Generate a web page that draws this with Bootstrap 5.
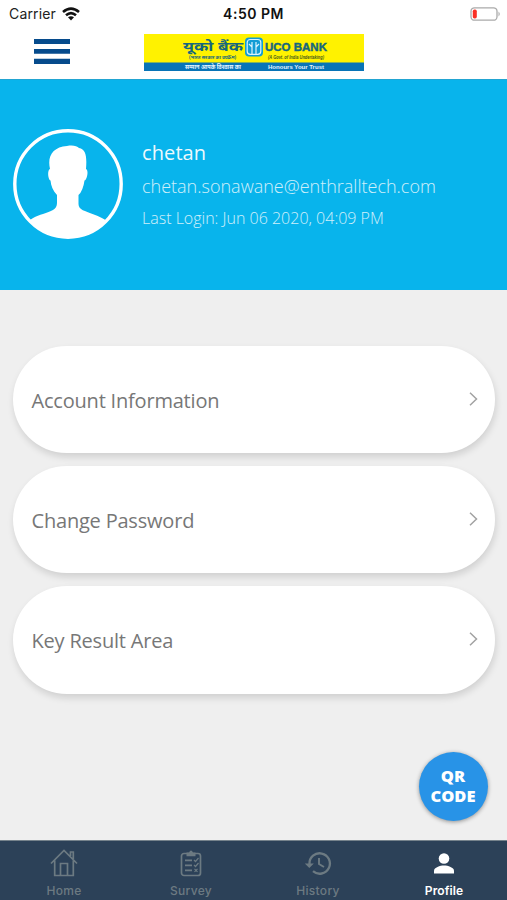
<!DOCTYPE html>
<html lang="en">
<head>
<meta charset="utf-8">
<meta name="viewport" content="width=device-width, initial-scale=1">
<title>Profile</title>
<link rel="stylesheet" href="https://cdn.jsdelivr.net/npm/bootstrap@5.3.0/dist/css/bootstrap.min.css">
<style>
body{background:#efefef;font-family:"Open Sans","Noto Sans",sans-serif;height:900px;overflow:hidden}
svg{display:block;flex:none}
.screen{height:900px}
.status-bar{height:28px;font:14px/28px Inter,sans-serif;color:#222;padding:0 6px 0 9px}
.carrier{letter-spacing:.15px}
.status-bar .clock{font-weight:600;font-size:14px;letter-spacing:.5px;color:#111;padding-right:3px}
.brand-bar{height:51px;padding:6px 0 0 34px}
.menu-btn{width:36px;margin-top:5px}
.brand-logo{margin-left:74px}
.hero{height:211px;background:#08b4ec;padding:0 13px;border-top:1px solid #22a5d2;color:#fff}
.avatar{margin-top:-2px}
.hero .person{margin-left:19px;white-space:nowrap}
.person-name{font-size:20px;line-height:32px;letter-spacing:.1px;font-weight:400;opacity:.93}
.person-mail{font-size:18px;line-height:34px;font-weight:300;opacity:.8}
.person-login{font-size:16px;line-height:30px;font-weight:300;opacity:.8}
.options{padding:55.5px 12.5px 0 13px;gap:12.5px}
.option{height:107.7px;border-radius:54px;background:#fff;color:#777;text-decoration:none;padding:3px 17px 0 18.5px;box-shadow:1px 4px 7px rgba(0,0,0,.13);font-size:20px;letter-spacing:-.2px}
.option svg{margin-top:-4px}
.qr-btn{width:69px;height:69px;background:#2893e7;color:#fff;font-weight:800;font-size:16.5px;line-height:20px;margin:0 19.5px 19px 0;padding-bottom:2px!important;box-shadow:0 1px 4px rgba(0,0,0,.4)}
.tabs{height:60px;background:#2c4158;border-top:1px solid #76838c;color:#6c7a82;font:500 12px/14px Inter,sans-serif;letter-spacing:.3px}
.tab-link{color:inherit;text-decoration:none;padding:8px 0 0 1px}
.tab-link span{margin-top:7px}
.tab-link.active{color:#fff;font-weight:600;letter-spacing:.1px;padding-left:0}
</style>
<script src="https://cdn.jsdelivr.net/npm/bootstrap@5.3.0/dist/js/bootstrap.bundle.min.js"></script>
</head>
<body>
<div class="screen d-flex flex-column">
<header class="bg-white">
  <div class="status-bar row g-0 align-items-center">
    <div class="col d-flex align-items-center"><span class="carrier">Carrier</span>
      <svg style="margin-left:6px" width="18" height="14" viewBox="0 0 18 14" fill="none" stroke="#111" stroke-width="2.6"><path d="M1 5Q9-1.8 17 5M4 8.3Q9 4 14 8.3"/><path d="M6 10.3Q9 8 12 10.3L9 13.5z" fill="#111" stroke="none"/></svg>
    </div>
    <div class="col-auto clock">4:50 PM</div>
    <div class="col d-flex justify-content-end">
      <svg width="31" height="14" viewBox="0 0 31 14"><rect x="1" y=".8" width="26" height="12.4" rx="3.5" fill="#fff" stroke="#aaa" stroke-width="1.3"/><rect x="2.8" y="2.6" width="4" height="8.8" rx="1.7" fill="#fa3026"/><path d="M28.5 4.5Q31 7 28.5 9.5z" fill="#aaa"/></svg>
    </div>
  </div>
  <div class="brand-bar d-flex align-items-start">
    <button class="menu-btn btn p-0 border-0" type="button" aria-label="Menu"><svg width="36" height="25" viewBox="0 0 36 25" fill="#064b8c"><path d="M0 0h36v5H0zM0 10h36v4.700H0zM0 19.800h36V25H0z"/></svg></button>
    <svg class="brand-logo" width="220" height="37" viewBox="0 0 220 37">
      <rect width="220" height="37" fill="#fff200"/><rect y="28.500" width="220" height="8.500" fill="#0874b7"/>
      <g fill="#17677d" font-family="Noto Sans, sans-serif" font-weight="700">
        <text x="39" y="17" font-size="13" textLength="60" lengthAdjust="spacingAndGlyphs">यूको बैंक</text>
        <text x="45" y="25" font-size="5" textLength="47" lengthAdjust="spacingAndGlyphs">(भारत सरकार का उपक्रम)</text>
      </g>
      <rect x="101" y="3.500" width="18" height="19" rx="4" fill="#129cd5"/>
      <g fill="none" stroke="#d9f3ff" stroke-width="1.200"><rect x="103.200" y="5.500" width="13.600" height="14.800" rx="3"/><path d="M108 20v-7l-3-3M112 20v-7l3-3M108 13V8M112 13V8"/></g>
      <g font-family="Liberation Sans, sans-serif" font-weight="700">
        <text x="121" y="17" font-size="10.500" fill="#17677d" stroke="#17677d" stroke-width=".4" textLength="62" lengthAdjust="spacingAndGlyphs">UCO BANK</text>
        <text x="124" y="25" font-size="4.500" font-style="italic" fill="#45591d" textLength="56" lengthAdjust="spacingAndGlyphs">(A Govt. of India Undertaking)</text>
        <text x="124" y="35" font-size="6" fill="#e6f5ff" textLength="56" lengthAdjust="spacingAndGlyphs">Honours Your Trust</text>
        <text x="41" y="35" font-size="6" font-family="Noto Sans, sans-serif" fill="#e6f5ff" textLength="56" lengthAdjust="spacingAndGlyphs">सम्मान आपके विश्वास का</text>
      </g>
    </svg>
  </div>
</header>
<section class="hero d-flex align-items-center">
  <svg class="avatar" width="110" height="110" viewBox="0 0 110 110"><defs><clipPath id="face"><circle cx="55" cy="55" r="53"/></clipPath></defs>
    <g clip-path="url(#face)"><path fill="#fff" d="M37 40C34 27 40 18 54 17c6-1 10 0 12 2 7 1 8 9 7 21 3 1 1 11-1.500 11.500Q70 62 65.500 66v9c0 6 7 7 14 10 6 2 13 5 18 10l5 20H6l5-19c6-6 12-9 19-11 8-3 14-4 14-11v-8c-4-4-6-9-6.500-14.500C35 51 34 41 37 40z"/></g>
    <circle cx="55" cy="55" r="53.200" fill="none" stroke="#fff" stroke-width="3.400"/></svg>
  <div class="person"><div class="person-name">chetan</div><div class="person-mail">chetan.sonawane@enthralltech.com</div><div class="person-login">Last Login: Jun 06 2020, 04:09 PM</div></div>
</section>
<main class="options d-flex flex-column">
  <a class="option d-flex align-items-center justify-content-between" href="#"><span>Account Information</span><svg width="9" height="14" viewBox="0 0 9 14" fill="none" stroke="#a2a2a2" stroke-width="1.500"><path d="M1 .8 7.500 7 1 13.200"/></svg></a>
  <a class="option d-flex align-items-center justify-content-between" href="#"><span>Change Password</span><svg width="9" height="14" viewBox="0 0 9 14" fill="none" stroke="#a2a2a2" stroke-width="1.500"><path d="M1 .8 7.500 7 1 13.200"/></svg></a>
  <a class="option d-flex align-items-center justify-content-between" href="#"><span>Key Result Area</span><svg width="9" height="14" viewBox="0 0 9 14" fill="none" stroke="#a2a2a2" stroke-width="1.500"><path d="M1 .8 7.500 7 1 13.200"/></svg></a>
</main>
<button type="button" class="qr-btn btn rounded-circle p-0 border-0 mt-auto align-self-end">QR<br>CODE</button>
<nav class="tabs row g-0 flex-shrink-0">
  <a class="tab-link col d-flex flex-column align-items-center" href="#"><svg width="28" height="28" viewBox="0 0 28 28" fill="none" stroke="currentColor" stroke-width="1.700"><path d="M1 14.500 14 1.500l13 13M4.700 11.500V26.500h18.600V11.500M20.500 7V3h2.800v7M10.500 26.500V14.500h7v12"/></svg><span>Home</span></a>
  <a class="tab-link col d-flex flex-column align-items-center" href="#"><svg width="28" height="28" viewBox="0 0 28 28" fill="none" stroke="currentColor" stroke-width="1.700"><rect x="4.500" y="4.500" width="19" height="22" rx="2.500"/><path d="M9.500 3.500H12q2-4 4 0h2.500v3.700h-9z" fill="currentColor" stroke="none"/><path d="M8 11.300h7M8 16.300h7M8 21.300h7"/><path d="m17 11 1.500 1.500 3-3.500M17 16l1.500 1.500 3-3.500M17.500 19.800l3 3m0-3-3 3" stroke-width="1.200"/></svg><span>Survey</span></a>
  <a class="tab-link col d-flex flex-column align-items-center" href="#"><svg width="28" height="28" viewBox="0 0 28 28" fill="none" stroke="currentColor" stroke-width="2.300"><path d="M5.500 15a10.200 10.200 0 1 1 3.500 7.200"/><path d="M.8 14.500h9L5.300 19z" fill="currentColor" stroke="none"/><path d="M15 9v6l5 3" stroke-width="1.900"/></svg><span>History</span></a>
  <a class="tab-link active col d-flex flex-column align-items-center" href="#"><svg width="28" height="28" viewBox="0 0 28 28" fill="currentColor"><circle cx="14" cy="9.500" r="5.300"/><path d="M4 24.500v-2.700c0-3.300 6-5.300 10-5.300s10 2 10 5.300v2.700z"/></svg><span>Profile</span></a>
</nav>
</div>
</body>
</html>
